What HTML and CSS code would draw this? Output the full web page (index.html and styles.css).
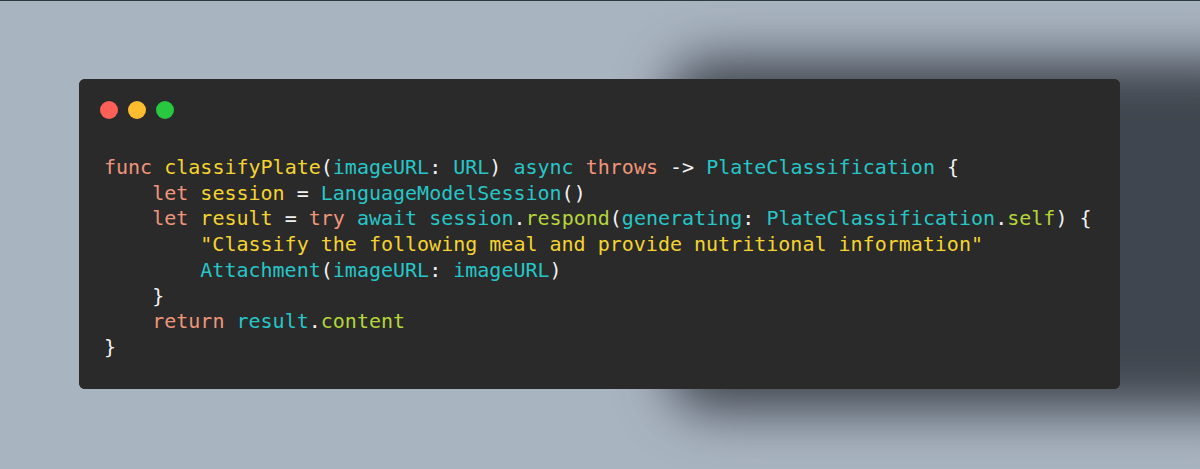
FILE: index.html
```html
<!DOCTYPE html>
<html>
<head>
<meta charset="utf-8">
<link rel="stylesheet" href="styles.css">
</head>
<body>
<div class="topline"></div>
<main class="stage">
  <section class="window">
    <div class="dots">
      <span class="dot red"></span>
      <span class="dot yellow"></span>
      <span class="dot green"></span>
    </div>
<pre class="code"><span class="kw">func</span> <span class="fn">classifyPlate</span><span class="pn">(</span><span class="ty">imageURL</span><span class="pn">:</span> <span class="ty">URL</span><span class="pn">)</span> <span class="ty">async</span> <span class="kw">throws</span> <span class="pn">-&gt;</span> <span class="ty">PlateClassification</span> <span class="pn">{</span>
    <span class="kw">let</span> <span class="fn">session</span> <span class="pn">=</span> <span class="ty">LanguageModelSession</span><span class="pn">()</span>
    <span class="kw">let</span> <span class="fn">result</span> <span class="pn">=</span> <span class="kw">try</span> <span class="ty">await</span> <span class="ty">session</span><span class="pn">.</span><span class="me">respond</span><span class="pn">(</span><span class="ty">generating</span><span class="pn">:</span> <span class="ty">PlateClassification</span><span class="pn">.</span><span class="me">self</span><span class="pn">) {</span>
        <span class="st">"Classify the following meal and provide nutritional information"</span>
        <span class="ty">Attachment</span><span class="pn">(</span><span class="ty">imageURL</span><span class="pn">:</span> <span class="ty">imageURL</span><span class="pn">)</span>
    <span class="pn">}</span>
    <span class="kw">return</span> <span class="ty">result</span><span class="pn">.</span><span class="me">content</span>
<span class="pn">}</span></pre>
  </section>
</main>
</body>
</html>
```

FILE: styles.css
```css
html, body {
  margin: 0;
  padding: 0;
  background: #a9b4c1;
  width: 1200px;
  height: 469px;
  overflow: hidden;
}

.topline {
  height: 1px;
  background: #2f3a40;
}

.stage {
  width: 1200px;
  height: 468px;
  box-sizing: border-box;
  overflow: hidden;
  padding: 78px 0 0 79px;
}

.window {
  position: relative;
  z-index: 0;
  width: 1041px;
  height: 310px;
  box-sizing: border-box;
  background: #2a2a2a;
  border-radius: 6px;
  padding: 22px 0 0 21px;
}

.window::before {
  content: "";
  position: absolute;
  z-index: -1;
  left: 590px;
  right: -160px;
  top: -20px;
  bottom: -22px;
  background: rgba(38, 42, 50, 0.8);
  border-radius: 40px;
  filter: blur(26px);
}

.window::after {
  content: "";
  position: absolute;
  z-index: -1;
  inset: 0;
  background: #2a2a2a;
  border-radius: 6px;
}

.dots {
  display: flex;
  gap: 10px;
}

.dot {
  width: 18px;
  height: 18px;
  border-radius: 50%;
  display: block;
}

.red { background: #fe5f57; }
.yellow { background: #febc2e; }
.green { background: #28c840; }

.code {
  margin: 36px 0 0 4px;
  font-family: "DejaVu Sans Mono", monospace;
  font-size: 20px;
  line-height: 25.7px;
  color: #f2f2f2;
}

.kw { color: #f0957a; }
.fn { color: #f5d430; }
.st { color: #f5d430; }
.ty { color: #26c6c8; }
.me { color: #b6d53a; }
.pn { color: #f2f2f2; }
```
